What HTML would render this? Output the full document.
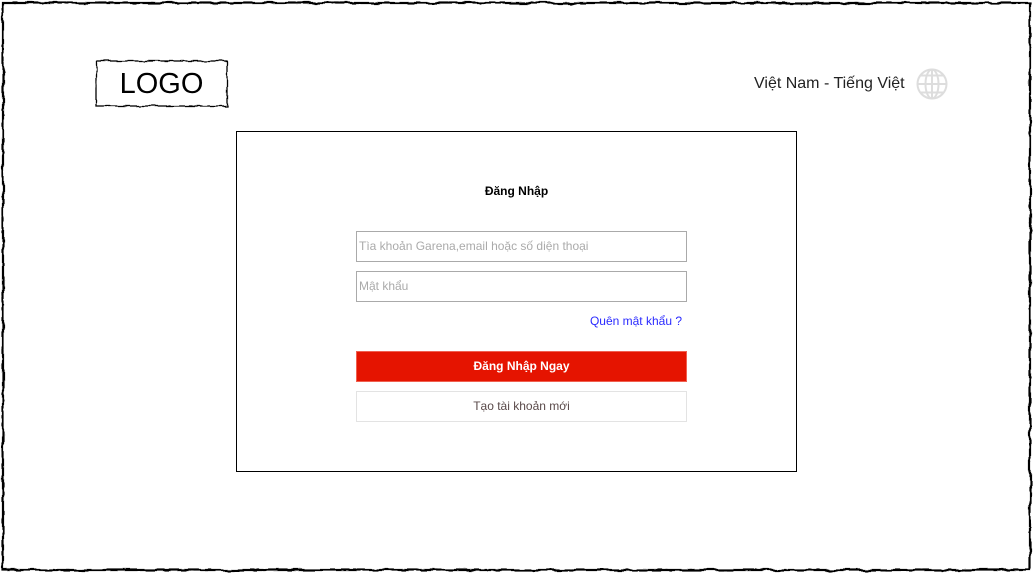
<!DOCTYPE html>
<html><head><meta charset="utf-8"><style>
body{margin:0;width:1033px;height:573px;background:#fff;position:relative;overflow:hidden;font-family:"Liberation Sans",Arial,sans-serif}
.a{position:absolute;box-sizing:border-box}
</style></head><body>
<svg class="a" style="left:0;top:0" width="1033" height="573">
<defs><filter id="w" x="-5%" y="-5%" width="110%" height="110%"><feTurbulence type="fractalNoise" baseFrequency="0.08" numOctaves="2" seed="3"/><feDisplacementMap in="SourceGraphic" scale="4"/></filter></defs>
<rect x="3" y="3" width="1027" height="567" fill="none" stroke="#000" stroke-width="2.2" filter="url(#w)"/>
<rect x="96" y="61" width="131" height="45" fill="none" stroke="#000" stroke-width="1.3" filter="url(#w)"/>
<g fill="none" stroke="#ddd" stroke-width="2">
<circle cx="932" cy="84" r="14.5"/>
<ellipse cx="932" cy="84" rx="6.5" ry="14.5"/>
<line x1="932" y1="69.5" x2="932" y2="98.5"/>
<line x1="917.5" y1="84" x2="946.5" y2="84"/>
<path d="M920 75.5h24M920 92.5h24"/>
</g>
</svg>
<div class="a" style="left:96px;top:65px;width:131px;text-align:center;font-size:29px;line-height:38px">LOGO</div>
<div class="a" style="left:754px;top:74px;font-size:16px;color:#222;line-height:20px">Việt Nam - Tiếng Việt</div>
<div class="a" style="left:236px;top:131px;width:561px;height:341px;border:1px solid #000"></div>
<div class="a" style="left:236px;top:183px;width:561px;text-align:center;font-size:12px;font-weight:bold;line-height:16px">Đăng Nhập</div>
<div class="a" style="left:356px;top:231px;width:331px;height:31px;border:1px solid #aaa;font-size:12px;color:#aaa;line-height:29px;padding-left:2px">Tìa khoản Garena,email hoặc số diện thoại</div>
<div class="a" style="left:356px;top:271px;width:331px;height:31px;border:1px solid #aaa;font-size:12px;color:#aaa;line-height:29px;padding-left:2px">Mật khẩu</div>
<div class="a" style="left:500px;top:313px;width:182px;text-align:right;font-size:12px;color:#2a2aff;line-height:16px">Quên mật khẩu ?</div>
<div class="a" style="left:356px;top:351px;width:331px;height:31px;background:#e51400;border:1px solid #f06050;color:#fff;font-size:12px;font-weight:bold;text-align:center;line-height:29px">Đăng Nhập Ngay</div>
<div class="a" style="left:356px;top:391px;width:331px;height:31px;border:1px solid #e3e3e3;color:#5a4a4a;font-size:12px;text-align:center;line-height:29px">Tạo tài khoản mới</div>
</body></html>
